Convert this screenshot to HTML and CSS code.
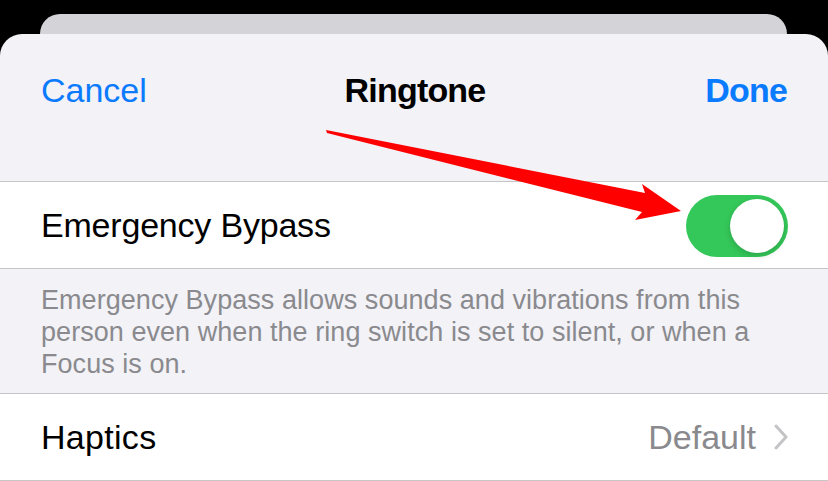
FILE: index.html
```html
<!DOCTYPE html>
<html>
<head>
<meta charset="utf-8">
<link rel="stylesheet" href="styles.css">
</head>
<body>
<div class="screen">
  <div class="back-card"></div>
  <div class="sheet">
    <div class="nav">
      <span class="nav-btn">Cancel</span>
      <span class="nav-title">Ringtone</span>
      <span class="nav-btn nav-done">Done</span>
    </div>
    <div class="group-gap"></div>
    <div class="row">
      <span class="row-label">Emergency Bypass</span>
      <div class="toggle"><div class="knob"></div></div>
    </div>
    <div class="footer">Emergency Bypass allows sounds and vibrations from this<br>person even when the ring switch is set to silent, or when a<br>Focus is on.</div>
    <div class="row">
      <span class="row-label row-label-wide">Haptics</span>
      <div class="row-value">
        <span class="value-text">Default</span>
        <svg class="chevron" width="14" height="26" viewBox="0 0 14 26"><path d="M2 2 L12 13 L2 24" fill="none" stroke="#c4c4c7" stroke-width="3" stroke-linecap="round" stroke-linejoin="round"/></svg>
      </div>
    </div>
  </div>
  <svg class="annotation" width="828" height="481" viewBox="0 0 828 481">
    <polygon points="326,130 645,193 642,184 681,211 635,220 642,212 327,133" fill="#ff0000"/>
  </svg>
</div>
</body>
</html>
```
FILE: styles.css
```css
html, body {
  margin: 0;
  padding: 0;
  background: #000;
}
body {
  font-family: "Liberation Sans", Arial, sans-serif;
  width: 828px;
  height: 481px;
  overflow: hidden;
}
.screen {
  position: relative;
  width: 828px;
  height: 481px;
  padding-top: 14px;
  box-sizing: border-box;
}
.back-card {
  height: 20px;
  margin: 0 41px 0 40px;
  background: #d4d3d8;
  border-radius: 20px 20px 0 0;
}
.sheet {
  background: #f2f2f7;
  border-radius: 22px 22px 0 0;
  height: 447px;
  overflow: hidden;
}
.nav {
  height: 112px;
  padding: 0 41px;
  display: flex;
  align-items: center;
  justify-content: space-between;
  position: relative;
}
.nav-btn {
  font-size: 34px;
  color: #0a7aff;
}
.nav-done {
  font-weight: 700;
  letter-spacing: -0.8px;
}
.nav-title {
  position: absolute;
  left: 0;
  right: 0;
  text-align: center;
  font-size: 34px;
  font-weight: 700;
  color: #000;
  letter-spacing: -0.8px;
  padding-left: 2px;
}
.group-gap {
  height: 35px;
}
.row {
  height: 86px;
  background: #fff;
  border-top: 1px solid #c6c6c8;
  border-bottom: 1px solid #c6c6c8;
  padding: 0 40px 0 41px;
  display: flex;
  align-items: center;
  justify-content: space-between;
}
.row-label {
  font-size: 34px;
  color: #000;
  letter-spacing: -0.2px;
}
.row-label-wide {
  letter-spacing: 0.3px;
}
.toggle {
  width: 102px;
  height: 62px;
  border-radius: 31px;
  background: #34c759;
  display: flex;
  align-items: center;
  justify-content: flex-end;
  padding: 0 4px;
  box-sizing: border-box;
  margin-top: 1px;
}
.knob {
  width: 54px;
  height: 54px;
  border-radius: 50%;
  background: #fff;
  box-shadow: 0 3px 6px rgba(0,0,0,0.15), 0 0 1px rgba(0,0,0,0.1);
}
.footer {
  padding: 15px 41px 13px 41px;
  font-size: 27px;
  line-height: 32px;
  color: #8a8a8e;
  white-space: nowrap;
  letter-spacing: 0.05px;
}
.row-value {
  display: flex;
  align-items: center;
  gap: 18px;
}
.value-text {
  font-size: 34px;
  color: #8a8a8e;
}
.chevron {
  display: block;
}
.annotation {
  position: absolute;
  left: 0;
  top: 0;
  pointer-events: none;
}
```
